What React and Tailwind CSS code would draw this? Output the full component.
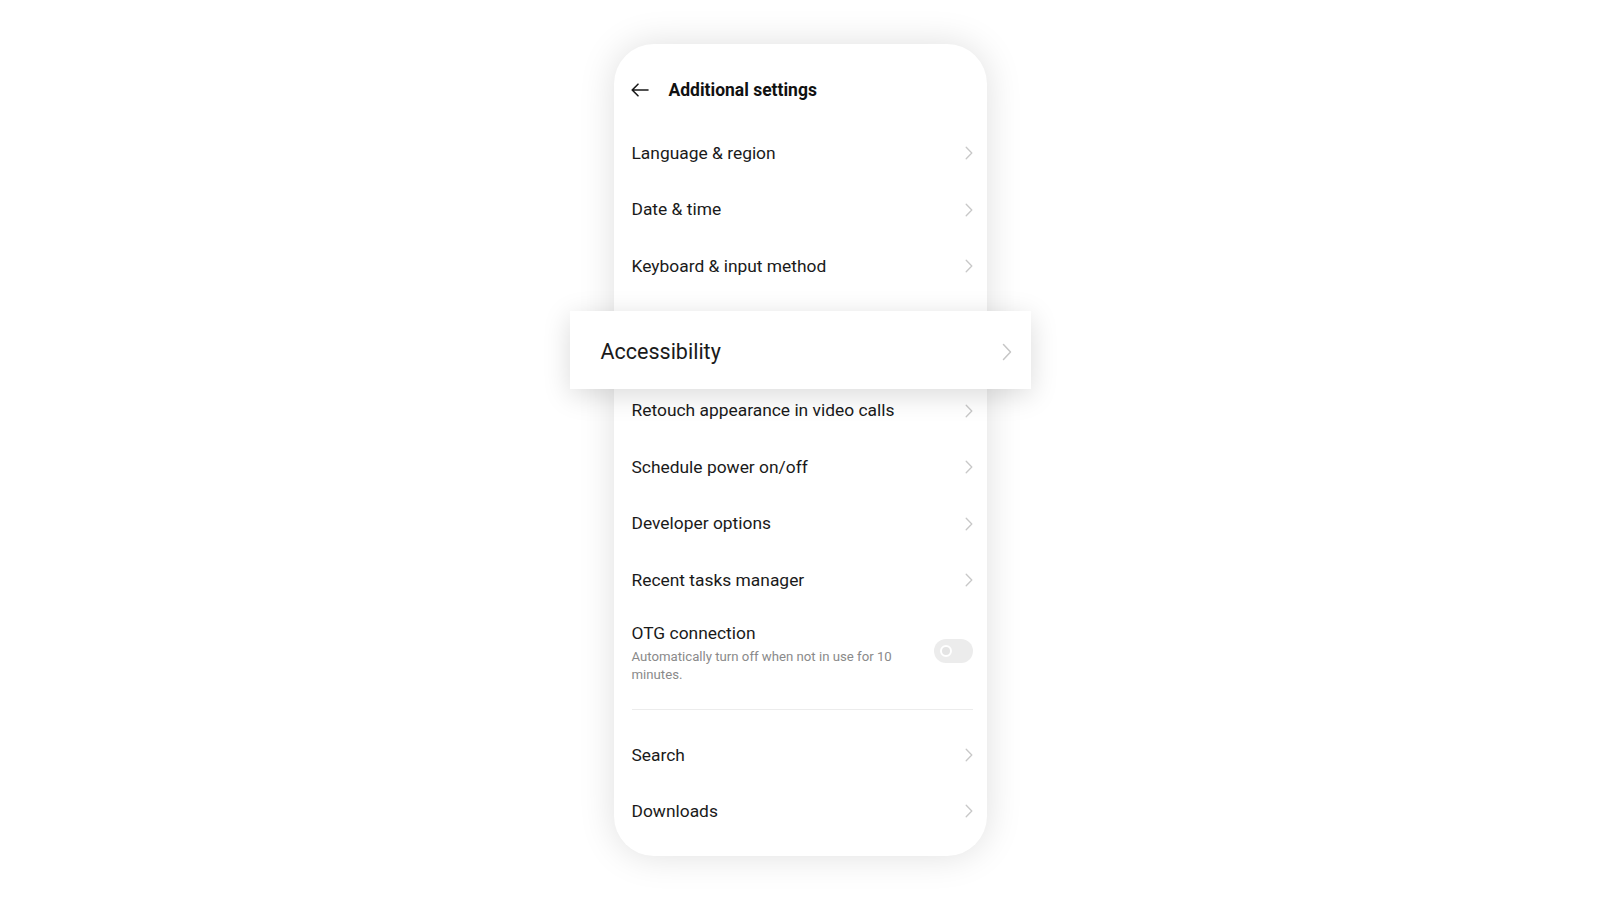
import React from 'react'

const font = { fontFamily: 'Roboto, "Noto Sans", sans-serif' }

function Chevron({ big }) {
  return big ? (
    <svg width="10" height="18" viewBox="0 0 10 18" fill="none">
      <path d="M1.5 1.5 L8.5 9 L1.5 16.5" stroke="#c6c6c6" strokeWidth="1.5" strokeLinecap="round" strokeLinejoin="round" />
    </svg>
  ) : (
    <svg width="8" height="14" viewBox="0 0 8 14" fill="none">
      <path d="M1.2 1.2 L6.8 7 L1.2 12.8" stroke="#c8c8c8" strokeWidth="1.3" strokeLinecap="round" strokeLinejoin="round" />
    </svg>
  )
}

function Row({ label }) {
  return (
    <div className="flex h-[56.5px] items-center justify-between">
      <span className="text-[17.4px] text-[#1a1a1a]">{label}</span>
      <Chevron />
    </div>
  )
}

export default function App() {
  return (
    <div className="min-h-[900px] w-full bg-white flex justify-center pt-[44px]" style={font}>
      <div className="w-[373px] h-[812px] rounded-[40px] bg-white shadow-[0_0_36px_rgba(0,0,0,0.13)] pl-[18px] pr-[14px]">
        {/* Header */}
        <div className="flex items-center h-[28px] mt-[32px] mb-[20.75px]">
          <svg width="18" height="14" viewBox="0 0 18 14" fill="none" className="ml-[-1px]">
            <path d="M17 7 H1.5 M7 1.2 L1.2 7 L7 12.8" stroke="#1a1a1a" strokeWidth="1.6" strokeLinecap="round" strokeLinejoin="round" />
          </svg>
          <h1 className="ml-[20px] text-[17.5px] font-bold text-[#111]">Additional settings</h1>
        </div>

        <Row label="Language & region" />
        <Row label="Date & time" />
        <Row label="Keyboard & input method" />

        {/* Highlighted row */}
        <div className="relative z-10 ml-[-62px] mr-[-58px] mt-[17px] mb-[-7px] h-[78px] bg-white shadow-[0_6px_28px_rgba(0,0,0,0.15)] flex items-center justify-between pl-[31px] pr-[19px]">
          <span className="text-[21.5px] text-[#1a1a1a] mt-[4px]">Accessibility</span>
          <span className="mt-[4px]"><Chevron big /></span>
        </div>

        <Row label="Retouch appearance in video calls" />
        <Row label="Schedule power on/off" />
        <Row label="Developer options" />
        <Row label="Recent tasks manager" />

        {/* OTG */}
        <div className="flex items-center justify-between pt-[14px]">
          <div>
            <div className="text-[17.4px] leading-[22px] text-[#1a1a1a]">OTG connection</div>
            <div className="mt-[4px] w-[272px] text-[13.2px] leading-[18px] text-[#8a8a8a]">
              Automatically turn off when not in use for 10 minutes.
            </div>
          </div>
          <div className="w-[39px] h-[24px] rounded-full bg-[#ececec] flex items-center pl-[6px] mt-[-4px]">
            <div className="w-[12px] h-[12px] rounded-full border-[2px] border-white bg-[#e4e4e4]" />
          </div>
        </div>

        <div className="mt-[25px] h-px bg-[#ececec]" />

        <div className="pt-[17px]">
          <div className="flex h-[56px] items-center justify-between">
            <span className="text-[17.4px] text-[#1a1a1a]">Search</span>
            <Chevron />
          </div>
          <div className="flex h-[56px] items-center justify-between">
            <span className="text-[17.4px] text-[#1a1a1a]">Downloads</span>
            <Chevron />
          </div>
        </div>
      </div>
    </div>
  )
}
